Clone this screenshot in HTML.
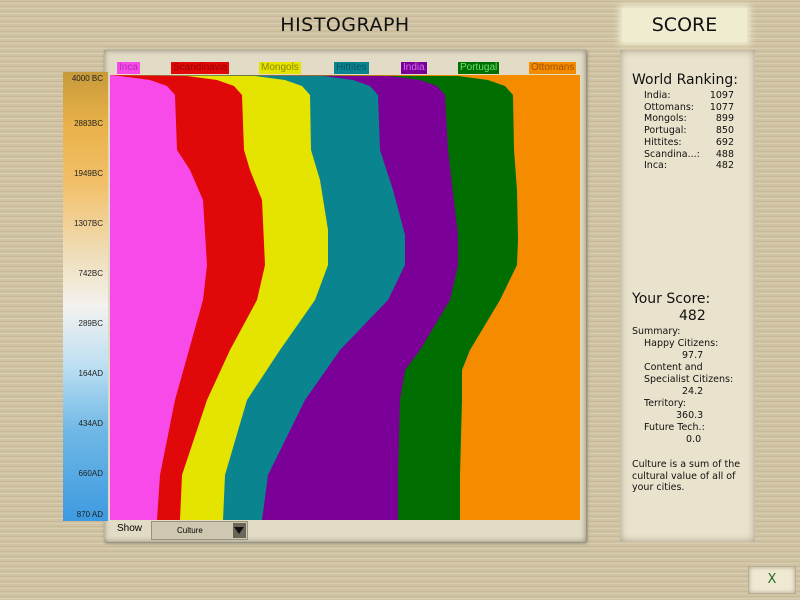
<!DOCTYPE html>
<html><head><meta charset="utf-8"><style>
*{margin:0;padding:0;box-sizing:border-box}
body{width:800px;height:600px;overflow:hidden;position:relative;font-family:"DejaVu Sans","Liberation Sans",sans-serif;
background:repeating-linear-gradient(180deg,#d4c8a8 0px,#c4b694 2px,#ddd2b6 3px,#cbbe9e 5px);}
.a{position:absolute}
.title{left:200px;top:8px;width:290px;height:34px;font-size:19px;color:#111;text-align:center;line-height:34px;letter-spacing:.5px}
.scorebox{left:622px;top:8px;width:125px;height:34px;background:#efecd0;box-shadow:0 0 6px 3px #efecd0;font-size:19px;text-align:center;line-height:34px;color:#111}
.chartbg{left:104px;top:50px;width:482px;height:492px;background:#e2dcc6;box-shadow:inset 0 0 6px #8a8070, 1px 1px 3px #776}
.axis{left:63px;top:72px;width:45px;height:449px;background:linear-gradient(180deg,#c79a3a 0%,#eab24a 12%,#f2c06a 25%,#efe0bf 42%,#f4f2ee 52%,#bfe0f2 65%,#6fb8e6 80%,#3d9ae0 100%);}
.axis div{position:absolute;right:5px;font-size:8px;color:#222;font-family:"Liberation Sans",sans-serif}
.tab{position:absolute;top:62px;height:12px;font-size:10px;line-height:12px;padding:0 2px;font-family:"Liberation Sans",sans-serif}
.panel{left:620px;top:50px;width:135px;height:492px;background:#e9e2cc;box-shadow:inset 0 0 8px #a09680;font-family:"DejaVu Sans",sans-serif;color:#111}
.r{font-size:9.5px;line-height:11.7px}
</style></head><body>
<div class="a title">HISTOGRAPH</div>
<div class="a scorebox">SCORE</div>
<div class="a chartbg"></div>
<div class="a axis">
<div style="top:2px">4000 BC</div><div style="top:47px">2883BC</div><div style="top:97px">1949BC</div><div style="top:147px">1307BC</div><div style="top:197px">742BC</div><div style="top:247px">289BC</div><div style="top:297px">164AD</div><div style="top:347px">434AD</div><div style="top:397px">660AD</div><div style="top:438px">870 AD</div>
</div>
<div class="tab" style="left:117px;background:#f84ae8;color:#b030b0">Inca</div>
<div class="tab" style="left:171px;background:#e00808;color:#900">Scandinavia</div>
<div class="tab" style="left:259px;background:#e4e400;color:#888800">Mongols</div>
<div class="tab" style="left:334px;background:#0a8590;color:#055560">Hittites</div>
<div class="tab" style="left:401px;background:#7a0098;color:#d070f0">India</div>
<div class="tab" style="left:458px;background:#006e00;color:#70e070">Portugal</div>
<div class="tab" style="left:529px;background:#f58c00;color:#a05000">Ottomans</div>
<svg class="a" style="left:0;top:0" width="800" height="600">
<rect x="110" y="75" width="470" height="445" fill="#f58c00"/>
<polygon fill="#006e00" points="110,520 110,75 458,76 488,80 505,86 513,95 514,150 517,190 518,240 517,265 500,300 470,350 462,370 462,400 460,475 460,520"/>
<polygon fill="#7a0098" points="110,520 110,75 390,76 420,80 437,86 445,95 448,150 458,235 458,265 450,300 420,350 405,370 400,400 398,475 398,520"/>
<polygon fill="#0a8590" points="110,520 110,75 323,76 353,80 370,86 378,95 380,150 393,190 405,235 405,265 388,300 340,350 305,400 268,475 262,520"/>
<polygon fill="#e4e400" points="110,520 110,75 255,76 285,80 302,86 310,95 311,150 320,180 328,230 328,265 315,300 280,350 247,400 225,475 223,520"/>
<polygon fill="#e00808" points="110,520 110,75 187,76 217,80 234,86 242,95 244,150 250,170 262,200 265,265 257,300 230,350 207,400 182,475 180,520"/>
<polygon fill="#f84ae8" points="110,520 110,75 120,76 150,80 167,86 175,95 177,150 190,170 203,200 207,265 203,300 175,400 160,475 157,520"/>
</svg>
<div class="a" style="left:117px;top:523px;font-size:10px;font-family:'Liberation Sans',sans-serif">Show</div>
<div class="a" style="left:151px;top:521px;width:97px;height:19px;background:#cfc8b0;border:1px solid #9a9280;font-size:8px;line-height:17px;padding-left:25px;font-family:'Liberation Sans',sans-serif">Culture</div>
<div class="a" style="left:233px;top:523px;width:13px;height:15px;background:#6a6658"><div style="margin:4px 1px;width:0;height:0;border-left:5px solid transparent;border-right:5px solid transparent;border-top:7px solid #111"></div></div>
<div class="a panel">
<div style="position:absolute;left:12px;top:22px;font-size:14px">World Ranking:</div>
<div class="r" style="position:absolute;left:24px;top:40px;width:90px">
<div>India:<span style="float:right">1097</span></div>
<div>Ottomans:<span style="float:right">1077</span></div>
<div>Mongols:<span style="float:right">899</span></div>
<div>Portugal:<span style="float:right">850</span></div>
<div>Hittites:<span style="float:right">692</span></div>
<div>Scandina...:<span style="float:right">488</span></div>
<div>Inca:<span style="float:right">482</span></div>
</div>
<div style="position:absolute;left:12px;top:241px;font-size:14px">Your Score:</div>
<div style="position:absolute;left:59px;top:258px;font-size:14px">482</div>
<div class="r" style="position:absolute;left:12px;top:276px">Summary:</div>
<div class="r" style="position:absolute;left:24px;top:288px">Happy Citizens:</div>
<div class="r" style="position:absolute;left:62px;top:300px">97.7</div>
<div class="r" style="position:absolute;left:24px;top:312px">Content and</div>
<div class="r" style="position:absolute;left:24px;top:324px">Specialist Citizens:</div>
<div class="r" style="position:absolute;left:62px;top:336px">24.2</div>
<div class="r" style="position:absolute;left:24px;top:348px">Territory:</div>
<div class="r" style="position:absolute;left:56px;top:360px">360.3</div>
<div class="r" style="position:absolute;left:24px;top:372px">Future Tech.:</div>
<div class="r" style="position:absolute;left:66px;top:384px">0.0</div>
<div class="r" style="position:absolute;left:12px;top:409px;width:120px">Culture is a sum of the cultural value of all of your cities.</div>
</div>
<div class="a" style="left:748px;top:566px;width:48px;height:28px;background:#efe9d2;border:1px solid #b8ae94;box-shadow:inset 0 0 4px #a89e84;text-align:center;line-height:26px;font-size:13px;color:#2a6a2a">X</div>
</body></html>
